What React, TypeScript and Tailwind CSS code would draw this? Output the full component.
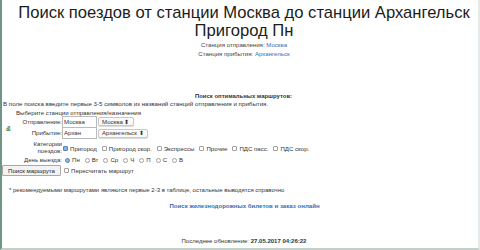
import React from 'react'

// Страница поиска поездов: заголовок, форма маршрута и подвал
const categories = [
  { label: 'Пригород', checked: true },
  { label: 'Пригород скор.', checked: false },
  { label: 'Экспрессы', checked: false },
  { label: 'Прочие', checked: false },
  { label: 'ПДС пасс.', checked: false },
  { label: 'ПДС скор.', checked: false },
]

const days = ['Пн', 'Вт', 'Ср', 'Ч', 'П', 'С', 'В']

function Box({ checked, round }: { checked?: boolean; round?: boolean }) {
  return (
    <span
      className={
        'inline-block h-[5px] w-[5px] shrink-0 border ' +
        (round ? 'rounded-full ' : 'rounded-[1px] ') +
        (checked ? 'border-[#5a84bd] bg-[#8fb3e0]' : 'border-[#a0a0a0] bg-white')
      }
    />
  )
}

export default function App() {
  return (
    <div
      className="h-[250px] w-[480px] overflow-hidden border-b-2 border-l-2 border-r-2 border-b-[#c2d0c9] border-l-[#6f9685] border-r-[#e3ebe7] bg-white text-[#222]"
      style={{ fontFamily: '"Liberation Sans", Arial, sans-serif' }}
    >
      {/* Заголовок */}
      <h1 className="pt-[4px] pl-[8px] text-center text-[16.6px] leading-[18px] font-normal text-[#1c1c1c]">
        Поиск поездов от станции Москва до станции Архангельск
        <br />
        Пригород Пн
      </h1>
      <div className="pl-[8px] text-center text-[6.1px] leading-[9px] text-[#444]">
        <div>
          Станция отправления: <span className="text-[#3a6db0]">Москва</span>
        </div>
        <div>
          Станция прибытия: <span className="text-[#3a6db0]">Архангельск</span>
        </div>
      </div>

      {/* Форма поиска маршрутов */}
      <div className="mt-[34px] text-[6.1px] leading-[8px] text-[#333]">
        <div className="pl-[7px] text-center text-[5.95px] font-bold">Поиск оптимальных маршрутов:</div>
        <div className="pl-[1px] text-[6.2px]">
          В поле поиска введите первые 3-5 символов из названий станций отправления и прибытия.
        </div>
        <div className="mt-[1px] pl-[14px] leading-[7px]">Выберите станции отправления/назначения</div>

        <div className="grid grid-cols-[12px_48px_1fr] items-center">
          <div className="row-span-2 pt-[3px] pl-[4px] text-[7px] font-bold italic text-[#4d8a3a]">&amp;</div>
          <div className="h-[11px] pt-[1px] text-right leading-[10px]">Отправление:</div>
          <div className="flex h-[11px] items-center">
            <span className="h-[12px] w-[35px] border border-[#bbb] bg-white pl-[1px] leading-[10px]">Москва</span>
            <span className="ml-[1px] flex h-[9px] items-center rounded-[2px] border border-[#c8c8c8] bg-[#fafafa] px-[3px] shadow-[0_1px_1px_rgba(0,0,0,0.15)]">
              Москва ⬍
            </span>
          </div>
          <div className="h-[12px] text-right leading-[12px]">Прибытие:</div>
          <div className="flex h-[12px] items-center">
            <span className="h-[12px] w-[35px] border border-[#bbb] bg-white pl-[1px] leading-[10px]">Архан</span>
            <span className="ml-[1px] flex h-[9px] items-center rounded-[2px] border border-[#c8c8c8] bg-[#fafafa] px-[3px] shadow-[0_1px_1px_rgba(0,0,0,0.15)]">
              Архангельск ⬍
            </span>
          </div>
          <div />
          <div className="h-[16px] pt-[1px] text-right leading-[7px]">
            Категории
            <br />
            поездов:
          </div>
          <div className="flex h-[16px] items-center gap-[5px] pt-[3px] pl-[1px]">
            {categories.map((c) => (
              <span key={c.label} className="flex items-center gap-[2px]">
                <Box checked={c.checked} />
                {c.label}
              </span>
            ))}
          </div>
          <div />
          <div className="h-[10px] text-right leading-[10px]">День выезда:</div>
          <div className="flex h-[10px] items-center gap-[5px] pl-[3px]">
            {days.map((d, i) => (
              <span key={d} className="flex items-center gap-[2px]">
                <Box round checked={i === 0} />
                {d}
              </span>
            ))}
          </div>
        </div>

        <div className="flex items-center">
          <button className="h-[11px] w-[59px] rounded-[1px] border border-[#a9a9a9] bg-[#f3f3f3] text-[6.1px] leading-[9px] text-[#222]">
            Поиск маршрута
          </button>
          <span className="ml-[3px] flex items-center gap-[2px]">
            <Box />
            Пересчитать маршрут
          </span>
        </div>

        <div className="mt-[10px] pl-[7px] text-[6px]">
          * рекомендуемыми маршрутами являются первые 2-3 в таблице, остальные выводятся справочно
        </div>
        <div className="mt-[8px] pl-[9px] text-center font-bold text-[#3a6db0]">
          Поиск железнодорожных билетов и заказ онлайн
        </div>
      </div>

      {/* Подвал */}
      <div className="mt-[27px] pl-[8px] text-center text-[6px] leading-[8px] text-[#333]">
        Последнее обновление: <span className="font-bold">27.05.2017 04:26:22</span>
      </div>
    </div>
  )
}
